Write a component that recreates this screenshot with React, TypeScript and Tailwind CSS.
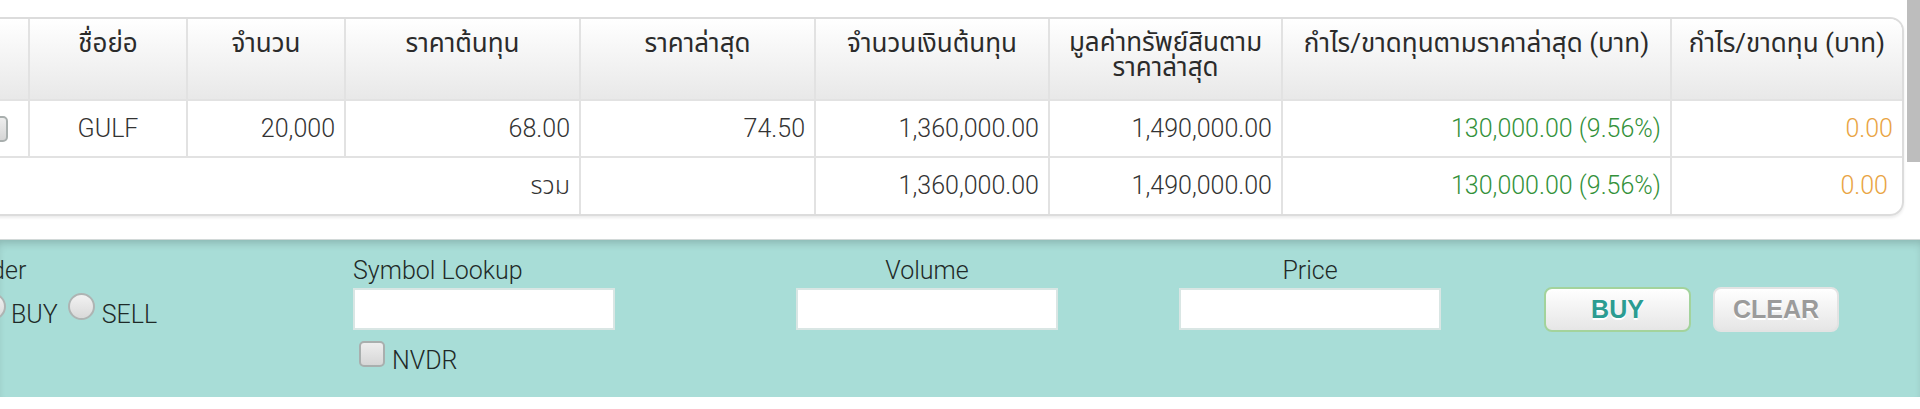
import React from 'react'

const font = "font-['Roboto','Noto_Sans_Thai','Noto_Sans',sans-serif]"

const widths = [67, 158, 158, 235, 235, 234, 233, 389, 231]

function Radio() {
  return (
    <span className="block shrink-0 w-[27px] h-[27px] rounded-full border-2 border-[#aeb4b3] bg-linear-to-b from-[#f2f2f2] to-[#d9d9d9]" />
  )
}

function Box() {
  return (
    <span className="inline-block w-[26px] h-[26px] rounded-[5px] border-2 border-[#a9afae] bg-linear-to-b from-[#eeeeee] to-[#d6d6d6] align-middle" />
  )
}

export default function App() {
  const line = 'border-[#e2e2e2]'
  const th = `border-r-2 border-b-2 ${line} align-top pt-[11px] px-1 text-[26px] leading-[26px] font-normal text-[#2b2b2b] text-center whitespace-nowrap`
  const num = 'px-[9px] text-[25px] font-light text-right'
  const green = 'text-[#33913a]'
  const orange = 'text-[#e9a443]'
  const dark = 'text-[#333]'

  return (
    <div className={`w-[1920px] h-[409px] bg-white overflow-hidden relative ${font}`}>
      {/* holdings table */}
      <div className="pt-[17px] ml-[-40px]">
        <div className="w-[1944px] border-2 border-[#dcdcdc] rounded-r-[14px] overflow-hidden shadow-[0_2px_3px_rgba(0,0,0,0.08)]">
          <table className="w-[1940px] table-fixed border-collapse">
            <colgroup>
              {widths.map((w, i) => (
                <col key={i} style={{ width: w }} />
              ))}
            </colgroup>
            <thead>
              <tr className="h-[81px] bg-linear-to-b from-white to-[#e8e8e8]">
                <th className={th}></th>
                <th className={th}>ชื่อย่อ</th>
                <th className={th}>จำนวน</th>
                <th className={th}>ราคาต้นทุน</th>
                <th className={th}>ราคาล่าสุด</th>
                <th className={th}>จำนวนเงินต้นทุน</th>
                <th className={`border-r-2 border-b-2 ${line} align-top pt-[9px] px-1 text-[26px] leading-[28px] font-normal text-[#2b2b2b] text-center whitespace-nowrap`}>
                  <div>มูลค่าทรัพย์สินตาม</div>
                  <div className="-mt-[3px]">ราคาล่าสุด</div>
                </th>
                <th className={th}>กำไร/ขาดทุนตามราคาล่าสุด (บาท)</th>
                <th className={`border-b-2 ${line} align-top pt-[11px] px-1 text-[26px] leading-[26px] font-normal text-[#2b2b2b] text-center whitespace-nowrap`}>
                  กำไร/ขาดทุน (บาท)
                </th>
              </tr>
            </thead>
            <tbody>
              <tr className="h-[57px]">
                <td className={`border-r-2 border-b-2 ${line} text-center`}>
                  <Box />
                </td>
                <td className={`border-r-2 border-b-2 ${line} text-center text-[25px] font-light ${dark}`}>GULF</td>
                <td className={`border-r-2 border-b-2 ${line} ${num} ${dark}`}>20,000</td>
                <td className={`border-r-2 border-b-2 ${line} ${num} ${dark}`}>68.00</td>
                <td className={`border-r-2 border-b-2 ${line} ${num} ${dark}`}>74.50</td>
                <td className={`border-r-2 border-b-2 ${line} ${num} ${dark}`}>1,360,000.00</td>
                <td className={`border-r-2 border-b-2 ${line} ${num} ${dark}`}>1,490,000.00</td>
                <td className={`border-r-2 border-b-2 ${line} ${num} ${green}`}>130,000.00 (9.56%)</td>
                <td className={`border-b-2 ${line} ${num} ${orange}`}>0.00</td>
              </tr>
              <tr className="h-[57px]">
                <td colSpan={4} className={`border-r-2 ${line} ${num} ${dark}`}>
                  รวม
                </td>
                <td className={`border-r-2 ${line}`}></td>
                <td className={`border-r-2 ${line} ${num} ${dark}`}>1,360,000.00</td>
                <td className={`border-r-2 ${line} ${num} ${dark}`}>1,490,000.00</td>
                <td className={`border-r-2 ${line} ${num} ${green}`}>130,000.00 (9.56%)</td>
                <td className={`pr-[14px] text-[25px] font-light text-right ${orange}`}>0.00</td>
              </tr>
            </tbody>
          </table>
        </div>
      </div>

      {/* scrollbar */}
      <div className="absolute right-0 top-0 w-[13px] h-[162px] bg-[#bdbdbd]" />

      {/* order form */}
      <div className="mt-[23px] h-[158px] bg-[#a8ddd7] shadow-[inset_0_6px_8px_-3px_rgba(0,0,0,0.18)] border-t border-[#d2d9d8] flex items-start pt-[18px] text-[25px] font-light text-[#1f2a28]">
        <div className="w-[353px]">
          <div className="ml-[-34px] leading-[26px]">Order</div>
          <div className="mt-[9px] ml-[-21px] flex items-start leading-[26px]">
            <Radio />
            <span className="mt-[9px] ml-[5px]">BUY</span>
            <span className="ml-[10px]">
              <Radio />
            </span>
            <span className="mt-[9px] ml-[7px]">SELL</span>
          </div>
        </div>

        <div className="w-[443px]">
          <div className="leading-[26px]">Symbol Lookup</div>
          <div className="mt-[4px] w-[262px] h-[42px] bg-white border-2 border-[#d9e6e4]" />
          <div className="mt-[11px] ml-[6px] flex items-start gap-[7px]">
            <Box />
            <span className="mt-[7px] leading-[26px]">NVDR</span>
          </div>
        </div>

        <div className="w-[383px]">
          <div className="w-[262px] text-center leading-[26px]">Volume</div>
          <div className="mt-[4px] w-[262px] h-[42px] bg-white border-2 border-[#d9e6e4]" />
        </div>

        <div className="w-[365px]">
          <div className="w-[262px] text-center leading-[26px]">Price</div>
          <div className="mt-[4px] w-[262px] h-[42px] bg-white border-2 border-[#d9e6e4]" />
        </div>

        <div className="mt-[29px] flex gap-[22px] font-['Liberation_Sans',Arial,sans-serif] font-bold text-[25px]">
          <div className="w-[147px] h-[45px] rounded-[8px] border-2 border-[#a3d39c] bg-linear-to-b from-white to-[#e6e6e6] flex items-center justify-center text-[#2b9c92] [text-shadow:0_2px_0_#ffffff]">
            BUY
          </div>
          <div className="w-[126px] h-[45px] rounded-[8px] border-2 border-[#e3e3e3] bg-linear-to-b from-white to-[#e6e6e6] flex items-center justify-center text-[#9b9b9b] [text-shadow:0_2px_0_#ffffff]">
            CLEAR
          </div>
        </div>
      </div>
    </div>
  )
}
